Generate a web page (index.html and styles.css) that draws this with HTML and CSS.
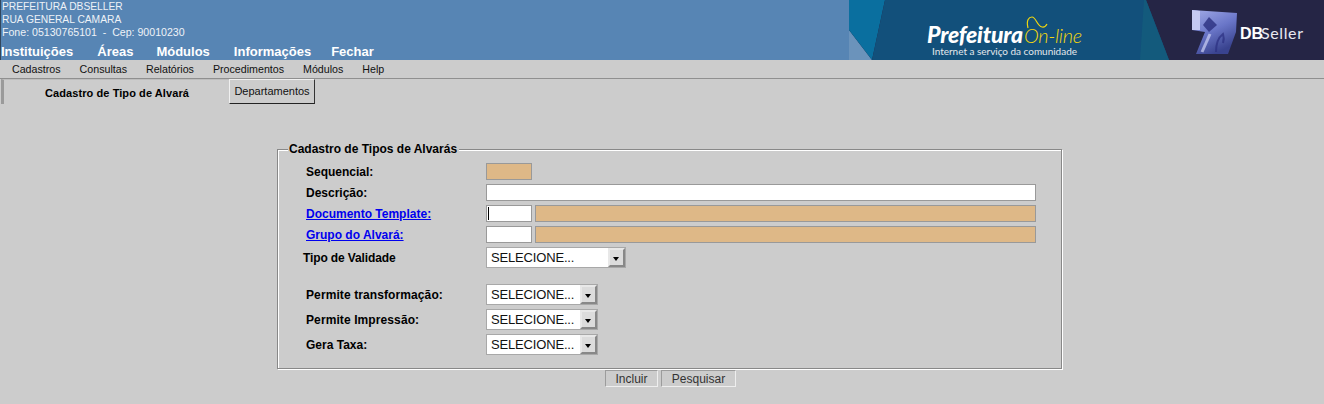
FILE: index.html
```html
<!DOCTYPE html>
<html>
	<head>
		<meta charset="utf-8"/>
		<title>Cadastro de Tipo de Alvará</title>
		<link rel="stylesheet" href="styles.css">
	</head>
	<body>
		<header class="topo">
			<div class="topo-info">
				<div class="dados">
					<div class="estreito">PREFEITURA DBSELLER</div>
					<div class="estreito">RUA GENERAL CAMARA</div>
					<div>Fone: 05130765101 &nbsp;-&nbsp; Cep: 90010230</div>
				</div>
				<nav class="menu-principal">
					<a>Instituições</a>
					<a>Áreas</a>
					<a class="modulos">Módulos</a>
					<a>Informações</a>
					<a class="fechar">Fechar</a>
				</nav>
			</div>
			<svg class="banner" width="475" height="60" viewBox="849 0 475 60">
				<defs>
					<linearGradient id="cubo" x1="0" y1="0" x2="0.5" y2="1">
						<stop offset="0" stop-color="#a3ace8"/>
						<stop offset="0.55" stop-color="#6a76c8"/>
						<stop offset="1" stop-color="#39438f"/>
					</linearGradient>
				</defs>
				<rect x="849" y="0" width="475" height="60" fill="#252545"/>
				<polygon points="849,30 872,60 849,60" fill="#6b93bb"/>
				<polygon points="849,0 885,0 872,60 849,30" fill="#0a6f9f"/>
				<polygon points="885,0 1146,0 1169,60 872,60" fill="#12507b"/>
				<polygon points="1144,0 1146,0 1169,60 1140,60" fill="#135a7c"/>
				<text class="logo-pref" x="927" y="43" textLength="96">Prefeitura</text>
				<text class="logo-online" x="1024" y="43" textLength="58">On-line</text>
				<path d="M1028 28C1026 20 1029 17 1032 17C1036 17 1037 26 1042 27C1044 27.5 1046 26 1047 24" fill="none" stroke="#f2d70e" stroke-width="1.2"/>
				<text class="logo-sub" x="932" y="55" textLength="145">Internet a serviço da comunidade</text>
				<polygon points="1192,10 1237,13 1236,32 1228,54 1196,54 1205,32 1192,30" fill="url(#cubo)"/>
				<polygon points="1192,10 1200,11 1200,30 1192,30" fill="#c5caf2"/>
				<polygon points="1209,17 1217,25 1209,32 1203,25" fill="#2b2f80" opacity="0.8"/>
				<path d="M1202 52L1210 34" stroke="#cdd2f5" stroke-width="3" fill="none" opacity="0.7"/>
				<path d="M1216 52c0-9 3-15 7-18c1 3 1 6 0 9" stroke="#2b2f80" stroke-width="2" fill="none" opacity="0.7"/>
				<text class="logo-db" x="1240" y="39">DB</text>
				<text class="logo-seller" x="1261" y="39" textLength="42">Seller</text>
			</svg>
		</header>

		<nav class="menu">
			<a>Cadastros</a>
			<a>Consultas</a>
			<a>Relatórios</a>
			<a>Procedimentos</a>
			<a>Módulos</a>
			<a>Help</a>
		</nav>

		<div class="abas">
			<div class="aba ativa">Cadastro de Tipo de Alvará</div>
			<div class="aba">Departamentos</div>
		</div>

		<form class="formulario">
			<fieldset>
				<legend>Cadastro de Tipos de Alvarás</legend>
				<div class="linha">
					<label>Sequencial:</label>
					<input class="curto leitura" type="text" readonly>
				</div>
				<div class="linha">
					<label>Descrição:</label>
					<input class="longo" type="text">
				</div>
				<div class="linha">
					<label><a href="#">Documento Template:</a></label>
					<input class="curto cursor" type="text">
					<input class="medio leitura" type="text" readonly>
				</div>
				<div class="linha">
					<label><a href="#">Grupo do Alvará:</a></label>
					<input class="curto" type="text">
					<input class="medio leitura" type="text" readonly>
				</div>
				<div class="linha alta recuo">
					<label>Tipo de Validade</label>
					<div class="combo largo"><span>SELECIONE...</span><i></i></div>
				</div>
				<div class="espaco"></div>
				<div class="linha alta solto">
					<label>Permite transformação:</label>
					<div class="combo"><span>SELECIONE...</span><i></i></div>
				</div>
				<div class="linha alta solto">
					<label>Permite Impressão:</label>
					<div class="combo"><span>SELECIONE...</span><i></i></div>
				</div>
				<div class="linha alta">
					<label>Gera Taxa:</label>
					<div class="combo"><span>SELECIONE...</span><i></i></div>
				</div>
			</fieldset>
			<div class="botoes">
				<button type="button">Incluir</button>
				<button type="button">Pesquisar</button>
			</div>
		</form>
	</body>
</html>
```

FILE: styles.css
```css
html, body {
	height: 100%;
	overflow: hidden;
}
body {
	margin: 0;
	background: #cccccc;
	color: #000;
	font-family: 'Liberation Sans', Arial, sans-serif;
	font-size: 11px;
}

.topo {
	display: flex;
	justify-content: space-between;
	height: 60px;
	background: #5785b4;
	border-left: 1px solid #33475c;
	box-sizing: border-box;
}
.topo-info {
	color: #fff;
}
.dados {
	padding: 0 0 0 1px;
	height: 43px;
	font-size: 10.6px;
	line-height: 13px;
	color: #eef2f7;
}
.estreito {
	font-size: 10.25px;
}
.menu-principal {
	display: flex;
	gap: 24px;
	font-size: 13px;
	font-weight: bold;
	line-height: 17px;
}
.modulos { margin-left: -1px; }
.fechar { margin-left: -4px; }
.banner {
	display: block;
	flex: none;
}
.logo-pref {
	font: italic 900 23px 'Lato', sans-serif;
	fill: #fff;
}
.logo-online {
	font: italic 300 20px 'Lato', sans-serif;
	fill: #f2d70e;
}
.logo-sub {
	font: 10px 'Lato', sans-serif;
	fill: #e4e8ec;
}
.logo-db {
	font: bold 16px 'Liberation Sans', sans-serif;
	fill: #fff;
}
.logo-seller {
	font: 16px 'Lato', sans-serif;
	fill: #e8e8f0;
}

.menu {
	display: flex;
	gap: 19px;
	height: 18px;
	padding-left: 12px;
	font-size: 10.67px;
	line-height: 18px;
	border-bottom: 1px solid #8f8f8f;
	color: #111;
}

.abas {
	display: flex;
	height: 25px;
	padding-left: 1px;
}
.aba {
	box-sizing: border-box;
	width: 86px;
	line-height: 22px;
	text-align: center;
	color: #111;
	border: 1px solid;
	border-color: #f0f0f0 #333 #222 #f0f0f0;
}
.aba.ativa {
	width: 228px;
	padding: 2px 0 0 1px;
	font-weight: bold;
	letter-spacing: 0.08px;
	color: #000;
	border: 0;
	border-left: 3px solid #9a9a9a;
	border-top: 1px solid #bdbdbd;
}

.formulario {
	width: 785px;
	margin: 38px 0 0 277px;
}
fieldset {
	box-sizing: border-box;
	height: 227px;
	margin: 0;
	padding: 5px 0 0 28px;
	border: 1px solid #888;
	box-shadow: inset 1px 1px 0 #fff, 1px 1px 0 #fff;
}
legend {
	margin-left: -18px;
	padding: 0 2px 0 1px;
	background: #cccccc;
	font-size: 12px;
	font-weight: bold;
	line-height: 14px;
}
.linha {
	display: flex;
	align-items: center;
	gap: 3px;
	height: 21px;
	font-size: 12px;
	font-weight: bold;
}
.linha.alta {
	height: 25px;
}
.linha label {
	width: 177px;
}
.linha.recuo label {
	margin-left: -3px;
	width: 180px;
	letter-spacing: -0.12px;
}
.linha.solto label {
	letter-spacing: 0.1px;
}
.linha a {
	color: #0000ee;
	text-decoration: underline;
}
.espaco {
	height: 12px;
}

input {
	box-sizing: border-box;
	height: 17px;
	margin: 0;
	padding: 0 2px;
	background: #fff;
	border: 1px solid #999;
	outline: 0;
}
.curto { width: 46px; }
.medio { width: 501px; }
.longo { width: 550px; }
.leitura { background: #deb887; }
.cursor {
	background: linear-gradient(#000, #000) 1px 1px / 1px 13px no-repeat #fff;
}

.combo {
	display: flex;
	box-sizing: border-box;
	width: 112px;
	height: 21px;
	padding-left: 4px;
	background: #fff;
	border: 1px solid #a8a8a8;
	font-size: 13px;
	font-weight: normal;
	letter-spacing: -0.17px;
	line-height: 20px;
	color: #111;
}
.combo.largo {
	width: 140px;
}
.combo span {
	flex: 1;
}
.combo i {
	position: relative;
	box-sizing: border-box;
	width: 17px;
	background: #dcdcdc;
	border: 2px solid;
	border-color: #e8e8e8 #888 #888 #e8e8e8;
}
.combo i::after {
	content: "";
	position: absolute;
	left: 3px;
	top: 7px;
	border: 3px solid transparent;
	border-top: 4px solid #000;
	border-bottom: 0;
}

.botoes {
	display: flex;
	gap: 3px;
	margin-top: 1px;
	padding-left: 328px;
}
button {
	box-sizing: border-box;
	height: 17px;
	margin: 0;
	padding: 0;
	width: 53px;
	background: #cccccc;
	border: 1px solid;
	border-color: #9c9c9c #eee #eee #9c9c9c;
	font-family: 'Liberation Sans', Arial, sans-serif;
	font-size: 12px;
	color: #333;
}
button + button {
	width: 75px;
}
```
